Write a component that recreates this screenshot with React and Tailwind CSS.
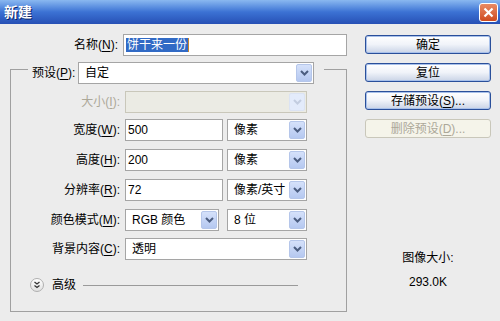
import React from "react"

function Chevron({ disabled }) {
  return (
    <svg width="9" height="6" viewBox="0 0 9 6">
      <path d="M1 1 L4.5 4.5 L8 1" fill="none" stroke={disabled ? "#c3cde0" : "#4b5d80"} strokeWidth="2" />
    </svg>
  )
}

function Mn({ text, k, tail = "):" }) {
  return (
    <span>
      {text}(<span className="underline underline-offset-2">{k}</span>{tail}
    </span>
  )
}

function Select({ w, children, disabled }) {
  return (
    <div className={`flex h-[22px] shrink-0 border ${disabled ? "border-[#c9c7ba] bg-[#ebebe4]" : "border-[#a5a5a5] bg-white"}`} style={{ width: w }}>
      <div className="flex-1 flex items-center pl-[6px] overflow-hidden whitespace-nowrap">{children}</div>
      <div className={`w-[16px] m-[1px] rounded-[2px] border flex items-center justify-center ${disabled ? "border-[#dbe3f3] bg-[#e3ebfb]" : "border-[#b5c6ea] bg-gradient-to-b from-[#d5e1fa] to-[#b5c8f0]"}`}>
        <Chevron disabled={disabled} />
      </div>
    </div>
  )
}

function Input({ w, children }) {
  return (
    <div className="h-[22px] shrink-0 border border-[#a5a5a5] bg-white flex items-center pl-[2px]" style={{ width: w }}>
      {children}
    </div>
  )
}

function Row({ label, mt, children, dim, gap = 4 }) {
  return (
    <div className="flex items-center h-[22px]" style={{ marginTop: mt }}>
      <div className={`w-[110px] text-right pr-[1px] ${dim ? "text-[#aca899]" : ""}`}>{label}</div>
      <div className="ml-[4px] flex" style={{ gap }}>{children}</div>
    </div>
  )
}

function Btn({ children, disabled, mt }) {
  return (
    <div
      className={`w-[126px] h-[19px] rounded-[3px] border flex items-center justify-center ${disabled ? "border-[#c9c7ba] bg-[#f5f4ea] text-[#aca899]" : "border-[#2a4f9a] bg-gradient-to-b from-white via-[#f0f3f9] to-[#c9d3e6] shadow-[inset_0_0_0_1px_#a9c1ea]"}`}
      style={{ marginTop: mt }}
    >
      {children}
    </div>
  )
}

export default function App() {
  return (
    <div className="w-[500px] h-[321px] bg-[#ececec] overflow-hidden text-[12px] leading-[14px] text-black font-['Liberation_Sans','Noto_Sans_CJK_SC',sans-serif]">
      {/* title bar */}
      <div className="h-[24px] flex items-center justify-between pl-[4px] pr-[2px] bg-gradient-to-b from-[#8ab8f0] via-[#3c72d4] to-[#2750b5]">
        <span className="text-white font-bold text-[14px] [text-shadow:1px_1px_0_#0a246a]">新建</span>
        <div className="w-[19px] h-[19px] rounded-[3px] border border-white bg-gradient-to-b from-[#e88a64] to-[#cf4a1c] flex items-center justify-center">
          <svg width="11" height="11" viewBox="0 0 11 11">
            <path d="M1.5 1.5 L9.5 9.5 M9.5 1.5 L1.5 9.5" stroke="white" strokeWidth="2.2" />
          </svg>
        </div>
      </div>

      <div className="flex">
        {/* left */}
        <div className="ml-[10px] w-[337px] shrink-0">
          <div className="flex items-center h-[22px] mt-[10px]">
            <div className="w-[111px] text-right pr-[1px]"><Mn text="名称" k="N" /></div>
            <div className="ml-[4px] w-[224px] h-[22px] shrink-0 border border-[#a5a5a5] bg-white flex items-center pl-[2px]">
              <span className="bg-[#316ac5] text-white px-[1px]">饼干来一份</span>
              <span className="w-[1px] h-[14px] bg-[#c8862c]" />
            </div>
          </div>

          <div className="mt-[13px] h-[243px] border border-[#a0a0a0]">
            <div className="flex items-center h-[22px] -mt-[8px] ml-[17px] w-[296px] bg-[#ececec] pl-[4px]">
              <span className="w-[46px]"><Mn text="预设" k="P" /></span>
              <Select w={236}>自定</Select>
            </div>
            <Row label={<Mn text="大小" k="I" />} dim mt={7}>
              <Select w={182} disabled />
            </Row>
            <Row label={<Mn text="宽度" k="W" />} mt={6}>
              <Input w={98}>500</Input>
              <Select w={80}>像素</Select>
            </Row>
            <Row label={<Mn text="高度" k="H" />} mt={8}>
              <Input w={98}>200</Input>
              <Select w={80}>像素</Select>
            </Row>
            <Row label={<Mn text="分辨率" k="R" />} mt={8}>
              <Input w={98}>72</Input>
              <Select w={80}>像素/英寸</Select>
            </Row>
            <Row label={<Mn text="颜色模式" k="M" />} mt={8} gap={8}>
              <Select w={94}>RGB 颜色</Select>
              <Select w={80}>8 位</Select>
            </Row>
            <Row label={<Mn text="背景内容" k="C" />} mt={7}>
              <Select w={182}>透明</Select>
            </Row>
            <div className="flex items-center mt-[18px] ml-[19px]">
              <div className="w-[14px] h-[14px] rounded-full border border-[#b0b0b0] bg-gradient-to-b from-white to-[#e0e0e0] flex items-center justify-center">
                <svg width="8" height="8" viewBox="0 0 8 8">
                  <path d="M1.5 1 L4 3 L6.5 1 M1.5 4.5 L4 6.5 L6.5 4.5" fill="none" stroke="#333" strokeWidth="1.3" />
                </svg>
              </div>
              <span className="ml-[8px]">高级</span>
              <div className="ml-[7px] w-[215px] h-[1px] bg-[#9a9a9a]" />
            </div>
          </div>
        </div>

        {/* right */}
        <div className="ml-[18px] flex flex-col items-center">
          <Btn mt={11}>确定</Btn>
          <Btn mt={9}>复位</Btn>
          <Btn mt={9}>存储预设(<span className="underline underline-offset-2">S</span>)...</Btn>
          <Btn mt={9} disabled>删除预设(<span className="underline underline-offset-2">D</span>)...</Btn>
          <div className="mt-[113px]">图像大小:</div>
          <div className="mt-[10px]">293.0K</div>
        </div>
      </div>
    </div>
  )
}
